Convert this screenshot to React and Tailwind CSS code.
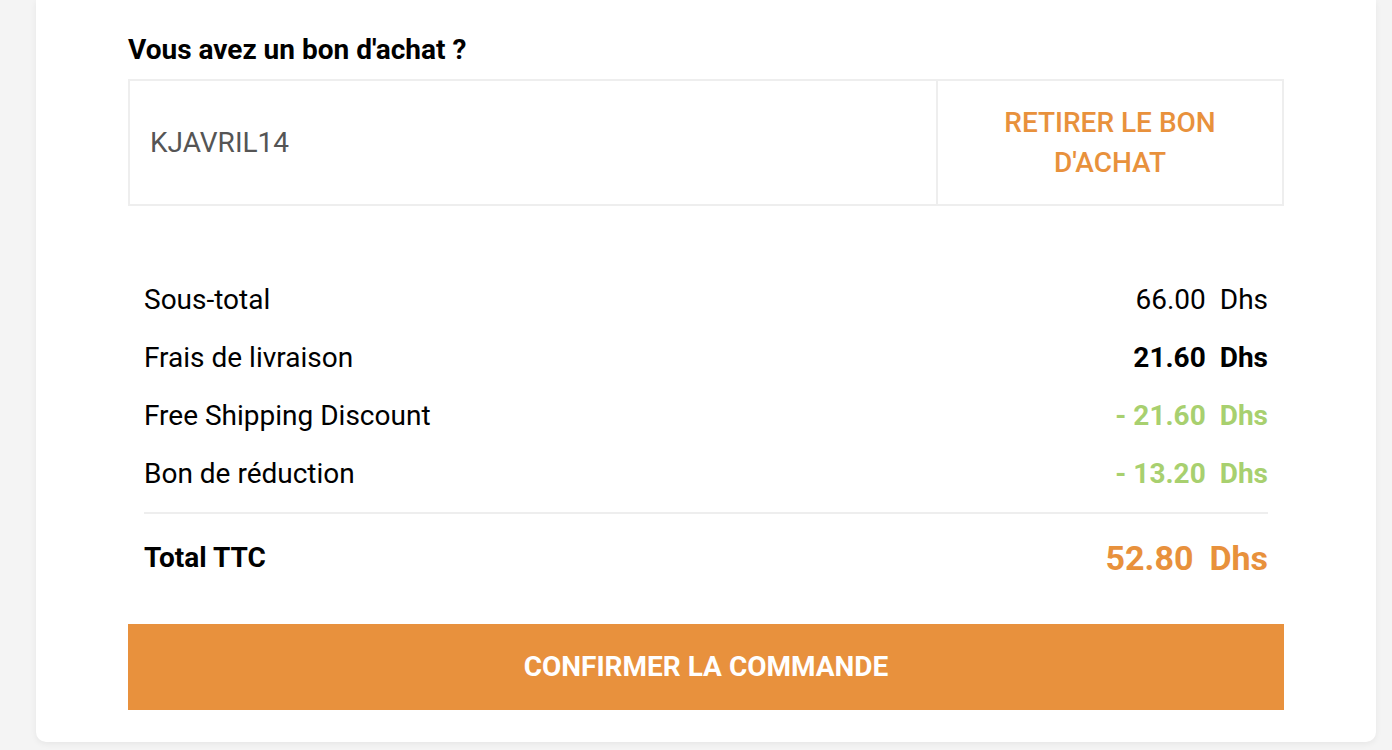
const rows = [
  { label: 'Sous-total', amount: '66.00', tone: 'text-black font-normal' },
  { label: 'Frais de livraison', amount: '21.60', tone: 'text-black font-bold' },
  { label: 'Free Shipping Discount', amount: '- 21.60', tone: 'text-[#a8d06f] font-bold' },
  { label: 'Bon de réduction', amount: '- 13.20', tone: 'text-[#a8d06f] font-bold' },
];

const App = () => {
  return (
    <div className="min-h-[750px] bg-[#f4f4f4] font-['Roboto',sans-serif] overflow-hidden">
      <div className="ml-[36px] w-[1340px] bg-white rounded-b-[10px] shadow-[0_2px_6px_rgba(0,0,0,0.06)] px-[92px] pt-[35px] pb-[32px]">
        <h2 className="text-[28px] leading-[30px] font-bold text-black">Vous avez un bon d'achat ?</h2>

        {/* Voucher box */}
        <div className="mt-[14px] flex h-[127px] border-2 border-[#eeeeee]">
          <div className="w-[806px] flex items-center pl-[20px] text-[28px] text-[#555555]">KJAVRIL14</div>
          <div className="w-[2px] bg-[#eeeeee]" />
          <button className="flex-1 flex items-center justify-center text-center text-[28px] leading-[40px] font-medium text-[#e8913c] px-10">
            RETIRER LE BON
            <br />
            D'ACHAT
          </button>
        </div>

        {/* Totals */}
        <div className="mt-[65px] px-[16px]">
          {rows.map((row) => (
            <div key={row.label} className="flex items-center justify-between h-[58px] text-[28px]">
              <span className="text-black">{row.label}</span>
              <span className={`${row.tone} flex gap-[14px]`}>
                <span>{row.amount}</span>
                <span>Dhs</span>
              </span>
            </div>
          ))}
          <div className="mt-[9px] h-[2px] bg-[#eeeeee]" />
          <div className="mt-[15px] flex items-center justify-between h-[58px]">
            <span className="text-[28px] font-bold text-black">Total TTC</span>
            <span className="text-[34px] font-bold text-[#e8913c] flex gap-[16px]">
              <span>52.80</span>
              <span>Dhs</span>
            </span>
          </div>
        </div>

        <button className="mt-[37px] w-full h-[86px] bg-[#e8913d] text-white text-[28px] font-bold">
          CONFIRMER LA COMMANDE
        </button>
      </div>
    </div>
  );
};

export default App;
